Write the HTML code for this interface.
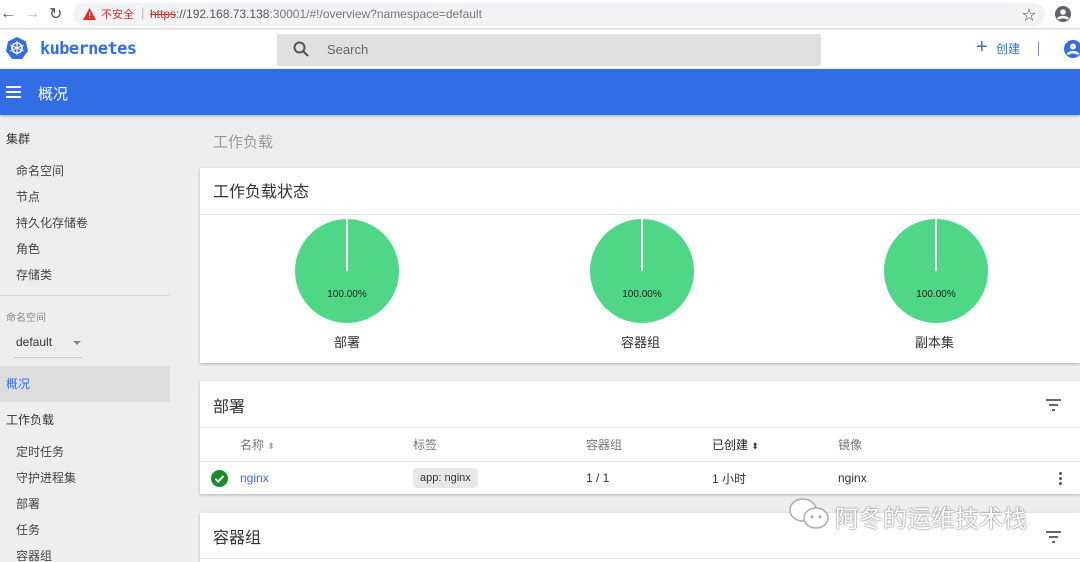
<!DOCTYPE html>
<html><head><meta charset="utf-8"><style>
*{margin:0;padding:0;box-sizing:border-box}
html,body{width:1080px;height:562px;overflow:hidden}
body{background:#eeeeee;font-family:"Liberation Sans","Noto Sans CJK SC",sans-serif;position:relative;color:#333}
.a{position:absolute;white-space:nowrap}
.sb{font-size:12px;color:#444}
.card{position:absolute;left:200px;width:880px;background:#fff;box-shadow:0 1px 3px rgba(0,0,0,.25)}
.hr{position:absolute;left:0;right:0;height:1px;background:#e4e4e4}
.pie{position:absolute;width:104px;height:104px;border-radius:50%;background:#4fd686}
.pie:after{content:"";position:absolute;left:51px;top:0;width:2px;height:52px;background:#fff}
.pl{position:absolute;left:0;width:104px;top:70px;text-align:center;font-size:10px;color:#222}
.th{font-size:12px;color:#777}
.td{font-size:12px;color:#333}
</style></head><body>
<div class="a" style="left:0;top:0;width:1080px;height:29px;background:#fff;border-bottom:1px solid #ddd"></div>
<div class="a" style="left:0;top:5px;font-size:16px;color:#555">←</div>
<div class="a" style="left:24px;top:5px;font-size:16px;color:#bbb">→</div>
<div class="a" style="left:49px;top:4px;font-size:16px;color:#555">↻</div>
<div class="a" style="left:73px;top:3px;width:972px;height:23px;border-radius:12px;background:#f1f3f4"></div>
<svg class="a" style="left:83px;top:8px" width="13" height="12"><polygon points="6.5,0 13,12 0,12" fill="#d93025"/><rect x="6" y="4" width="1.2" height="4" fill="#fff"/><rect x="6" y="9" width="1.2" height="1.2" fill="#fff"/></svg>
<div class="a" style="left:101px;top:6px;font-size:11px;color:#d93025">不安全</div>
<div class="a" style="left:141px;top:5px;font-size:13px;color:#bbb">|</div>
<div class="a" style="left:150px;top:7px;font-size:12px;color:#555"><span style="color:#d93025;text-decoration:line-through">https</span>://192.168.73.138<span style="color:#777">:30001/#!/overview?namespace=default</span></div>
<div class="a" style="left:1022px;top:5px;font-size:14px;color:#555">☆</div>
<svg class="a" style="left:1055px;top:6px" width="16" height="16"><circle cx="8" cy="8" r="8" fill="#5f6368"/><circle cx="8" cy="6" r="2.8" fill="#fff"/><path d="M3 13c1.5-2.5 8.5-2.5 10 0" stroke="#fff" stroke-width="2.4" fill="none"/></svg>
<div class="a" style="left:0;top:30px;width:1080px;height:39px;background:#fff"></div>
<svg class="a" style="left:5px;top:36px" width="24" height="24"><polygon points="12,1 21,5.5 23,15 17,23 7,23 1,15 3,5.5" fill="#326de6"/><circle cx="12" cy="12" r="5" stroke="#fff" stroke-width="1.6" fill="none"/><path d="M12 5v14M5.5 9l13 6M5.5 15l13-6" stroke="#fff" stroke-width="1.2"/></svg>
<div class="a" style="left:40px;top:39px;font-size:17px;font-weight:bold;color:#326de6;font-family:'DejaVu Sans Mono','Liberation Mono',monospace;letter-spacing:-0.6px">kubernetes</div>
<div class="a" style="left:277px;top:34px;width:544px;height:32px;background:#e0e0e0;border-radius:2px"></div>
<svg class="a" style="left:293px;top:41px" width="16" height="16"><circle cx="6.5" cy="6.5" r="5" stroke="#555" stroke-width="2" fill="none"/><path d="M10 10l5 5" stroke="#555" stroke-width="2"/></svg>
<div class="a" style="left:327px;top:42px;font-size:13px;color:#666">Search</div>
<div class="a" style="left:976px;top:36px;font-size:20px;color:#326de6;line-height:22px">+</div>
<div class="a" style="left:996px;top:40px;font-size:12px;color:#326de6">创建</div>
<div class="a" style="left:1038px;top:42px;width:1px;height:14px;background:#9b7fe0"></div>
<svg class="a" style="left:1064px;top:40px" width="18" height="18"><circle cx="9" cy="9" r="9" fill="#326de6"/><circle cx="9" cy="6.5" r="3" fill="#fff"/><path d="M3.5 14.5c2-3 9-3 11 0" stroke="#fff" stroke-width="2.6" fill="none"/></svg>
<div class="a" style="left:0;top:69px;width:1080px;height:46px;background:#326de6;box-shadow:0 1px 3px rgba(0,0,0,.3)"></div>
<div class="a" style="left:6px;top:86px;width:15px;height:2px;background:#fff;box-shadow:0 5px 0 #fff,0 10px 0 #fff"></div>
<div class="a" style="left:38px;top:83px;font-size:15px;color:#fff">概况</div>
<div class="a sb" style="left:6px;top:130px;color:#333">集群</div>
<div class="a sb" style="left:16px;top:162px">命名空间</div>
<div class="a sb" style="left:16px;top:188px">节点</div>
<div class="a sb" style="left:16px;top:214px">持久化存储卷</div>
<div class="a sb" style="left:16px;top:240px">角色</div>
<div class="a sb" style="left:16px;top:266px">存储类</div>
<div class="a" style="left:0;top:295px;width:170px;height:1px;background:#d8d8d8"></div>
<div class="a" style="left:6px;top:309px;font-size:10px;color:#888">命名空间</div>
<div class="a" style="left:16px;top:335px;font-size:12px;color:#333">default</div>
<div class="a" style="left:73px;top:341px;border:4px solid transparent;border-top:4px solid #888"></div>
<div class="a" style="left:14px;top:357px;width:68px;height:1px;background:#ccc"></div>
<div class="a" style="left:0;top:366px;width:170px;height:36px;background:#dddddd"></div>
<div class="a" style="left:6px;top:375px;font-size:12px;color:#326de6">概况</div>
<div class="a sb" style="left:6px;top:411px;color:#333">工作负载</div>
<div class="a sb" style="left:16px;top:443px">定时任务</div>
<div class="a sb" style="left:16px;top:469px">守护进程集</div>
<div class="a sb" style="left:16px;top:495px">部署</div>
<div class="a sb" style="left:16px;top:521px">任务</div>
<div class="a sb" style="left:16px;top:547px">容器组</div>
<div class="a" style="left:213px;top:131px;font-size:15px;color:#999">工作负载</div>
<div class="card" style="top:168px;height:195px">
<div class="a" style="left:13px;top:10px;font-size:16px;color:#333">工作负载状态</div>
<div class="hr" style="top:46px"></div>
<div class="pie" style="left:95px;top:51px"><div class="pl">100.00%</div></div>
<div class="pie" style="left:390px;top:51px"><div class="pl">100.00%</div></div>
<div class="pie" style="left:684px;top:51px"><div class="pl">100.00%</div></div>
<div class="a" style="left:134px;top:164px;font-size:13px">部署</div>
<div class="a" style="left:421px;top:164px;font-size:13px">容器组</div>
<div class="a" style="left:715px;top:164px;font-size:13px">副本集</div>
</div>
<div class="card" style="top:381px;height:113px">
<div class="a" style="left:13px;top:12px;font-size:16px;color:#333">部署</div>
<div class="a" style="left:846px;top:18px;width:15px;height:2px;background:#666"></div>
<div class="a" style="left:849px;top:23px;width:9px;height:2px;background:#666"></div>
<div class="a" style="left:852px;top:28px;width:3px;height:2px;background:#666"></div>
<div class="hr" style="top:46px"></div>
<div class="a th" style="left:40px;top:55px">名称 <span style="font-size:9px;color:#aaa">⬍</span></div>
<div class="a th" style="left:213px;top:55px">标签</div>
<div class="a th" style="left:386px;top:55px">容器组</div>
<div class="a th" style="left:512px;top:55px;color:#222">已创建 <span style="font-size:9px;color:#444">⬍</span></div>
<div class="a th" style="left:638px;top:55px">镜像</div>
<div class="hr" style="top:80px"></div>
<svg class="a" style="left:11px;top:89px" width="17" height="17"><circle cx="8.5" cy="8.5" r="8.5" fill="#1b8a2a"/><path d="M4.5 8.8l2.8 2.8 5.2-5.6" stroke="#fff" stroke-width="2" fill="none"/></svg>
<div class="a td" style="left:40px;top:90px;color:#326de6">nginx</div>
<div class="a" style="left:213px;top:87px;height:20px;padding:0 7px;background:#e8e8e8;border-radius:4px;font-size:11px;line-height:20px;color:#333">app: nginx</div>
<div class="a td" style="left:386px;top:90px">1 / 1</div>
<div class="a td" style="left:512px;top:89px">1 小时</div>
<div class="a td" style="left:638px;top:90px">nginx</div>
<div class="a" style="left:859px;top:91px;width:3px;height:3px;background:#555;border-radius:50%;box-shadow:0 5px 0 #555,0 10px 0 #555"></div>
</div>
<div class="card" style="top:513px;height:60px">
<div class="a" style="left:13px;top:11px;font-size:16px;color:#333">容器组</div>
<div class="a" style="left:846px;top:18px;width:15px;height:2px;background:#666"></div>
<div class="a" style="left:849px;top:23px;width:9px;height:2px;background:#666"></div>
<div class="a" style="left:852px;top:28px;width:3px;height:2px;background:#666"></div>
<div class="hr" style="top:45px"></div>
</div>
<svg class="a" style="left:787px;top:496px" width="44" height="36"><ellipse cx="16" cy="14" rx="13" ry="11" fill="#fff" stroke="#aaa" stroke-width="1.5"/><ellipse cx="29" cy="22" rx="12" ry="10" fill="#fff" stroke="#aaa" stroke-width="1.5"/><circle cx="25" cy="21" r="1.5" fill="#aaa"/><circle cx="33" cy="21" r="1.5" fill="#aaa"/></svg>
<div class="a" style="left:835px;top:499px;font-size:24px;color:#fff;text-shadow:0 0 2px #888,0 0 1px #666">阿冬的运维技术栈</div>
</body></html>
